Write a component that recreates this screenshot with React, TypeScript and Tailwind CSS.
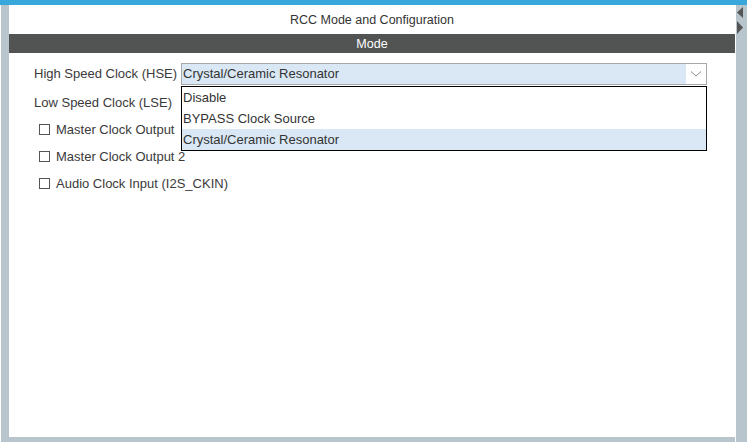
import React from 'react';

const font = { fontFamily: '"Liberation Sans", Arial, sans-serif' };

const Chevron = () => (
  <svg width="12" height="8" viewBox="0 0 12 8" className="text-[#8a8a8a]">
    <path d="M1 1.5 L6 6 L11 1.5" fill="none" stroke="currentColor" strokeWidth="1" />
  </svg>
);

const Check = ({ label }: { label: string }) => (
  <div className="flex items-center h-[27px] pl-[30px]">
    <span className="w-[11px] h-[11px] border border-[#555] bg-white mr-[6px]"></span>
    <span className="text-[13px] text-[#3a3a3a]">{label}</span>
  </div>
);

const options = ['Disable', 'BYPASS Clock Source', 'Crystal/Ceramic Resonator'];

const App: React.FC = () => {
  return (
    <div className="w-[747px] h-[442px] bg-white flex flex-col overflow-hidden" style={font}>
      <div className="h-[5px] bg-[#38a8dc] shrink-0"></div>
      <div className="flex flex-1 min-h-0">
        <div className="flex flex-col flex-1 min-w-0">
          <div className="flex flex-1 min-h-0">
            <div className="w-[8px] ml-[1px] bg-[#b9c5cc] shrink-0"></div>
            <div className="flex-1 flex flex-col">
              <div className="h-[29px] pt-[2px] flex items-center justify-center text-[12.5px] text-[#333]">
                RCC Mode and Configuration
              </div>
              <div className="h-[19px] pt-[2px] bg-[#525453] flex items-center justify-center text-[12.5px] text-white">
                Mode
              </div>
              <div className="relative flex flex-col pt-[10px]">
                <div className="flex items-center h-[22px] pl-[25px]">
                  <span className="w-[147px] text-[13px] text-[#3a3a3a]">High Speed Clock (HSE)</span>
                  <div className="w-[526px] h-[22px] border border-[#a5a9ab] bg-[#dae8f5] flex">
                    <span className="flex-1 flex items-center pl-[1px] text-[13px] text-[#333]">
                      Crystal/Ceramic Resonator
                    </span>
                    <span className="w-[20px] bg-white flex items-center justify-center">
                      <Chevron />
                    </span>
                  </div>
                </div>
                <div className="flex items-center h-[22px] mt-[7px] pl-[25px]">
                  <span className="w-[147px] text-[13px] text-[#3a3a3a]">Low Speed Clock (LSE)</span>
                  <div className="w-[526px] h-[22px] border border-[#a5a9ab] bg-white"></div>
                </div>
                <div className="mt-[2px]">
                  <Check label="Master Clock Output" />
                  <Check label="Master Clock Output 2" />
                  <Check label="Audio Clock Input (I2S_CKIN)" />
                </div>

                <div className="absolute left-[172px] top-[33px] w-[526px] border border-black bg-white flex flex-col">
                  {options.map((o, i) => (
                    <div
                      key={o}
                      className={`h-[21px] flex items-center pl-[1px] text-[13px] text-[#333] ${
                        i === 2 ? 'bg-[#dae8f5]' : ''
                      }`}
                    >
                      {o}
                    </div>
                  ))}
                </div>
              </div>
            </div>
          </div>
          <div className="h-[5px] ml-[1px] bg-[#b9c5cc] shrink-0"></div>
        </div>
        <div className="w-[11px] ml-[1px] bg-[#b9c5cc] shrink-0 flex flex-col items-start pt-[2px] pl-[1px]">
          <svg width="7" height="11" viewBox="0 0 7 11">
            <path d="M6 0 L0 5.5 L6 11 Z" fill="#555" />
          </svg>
          <svg width="7" height="13" viewBox="0 0 7 13" className="mt-[3px]">
            <path d="M0 0 L6 6.5 L0 13 Z" fill="#555" />
          </svg>
        </div>
      </div>
    </div>
  );
};

export default App;
